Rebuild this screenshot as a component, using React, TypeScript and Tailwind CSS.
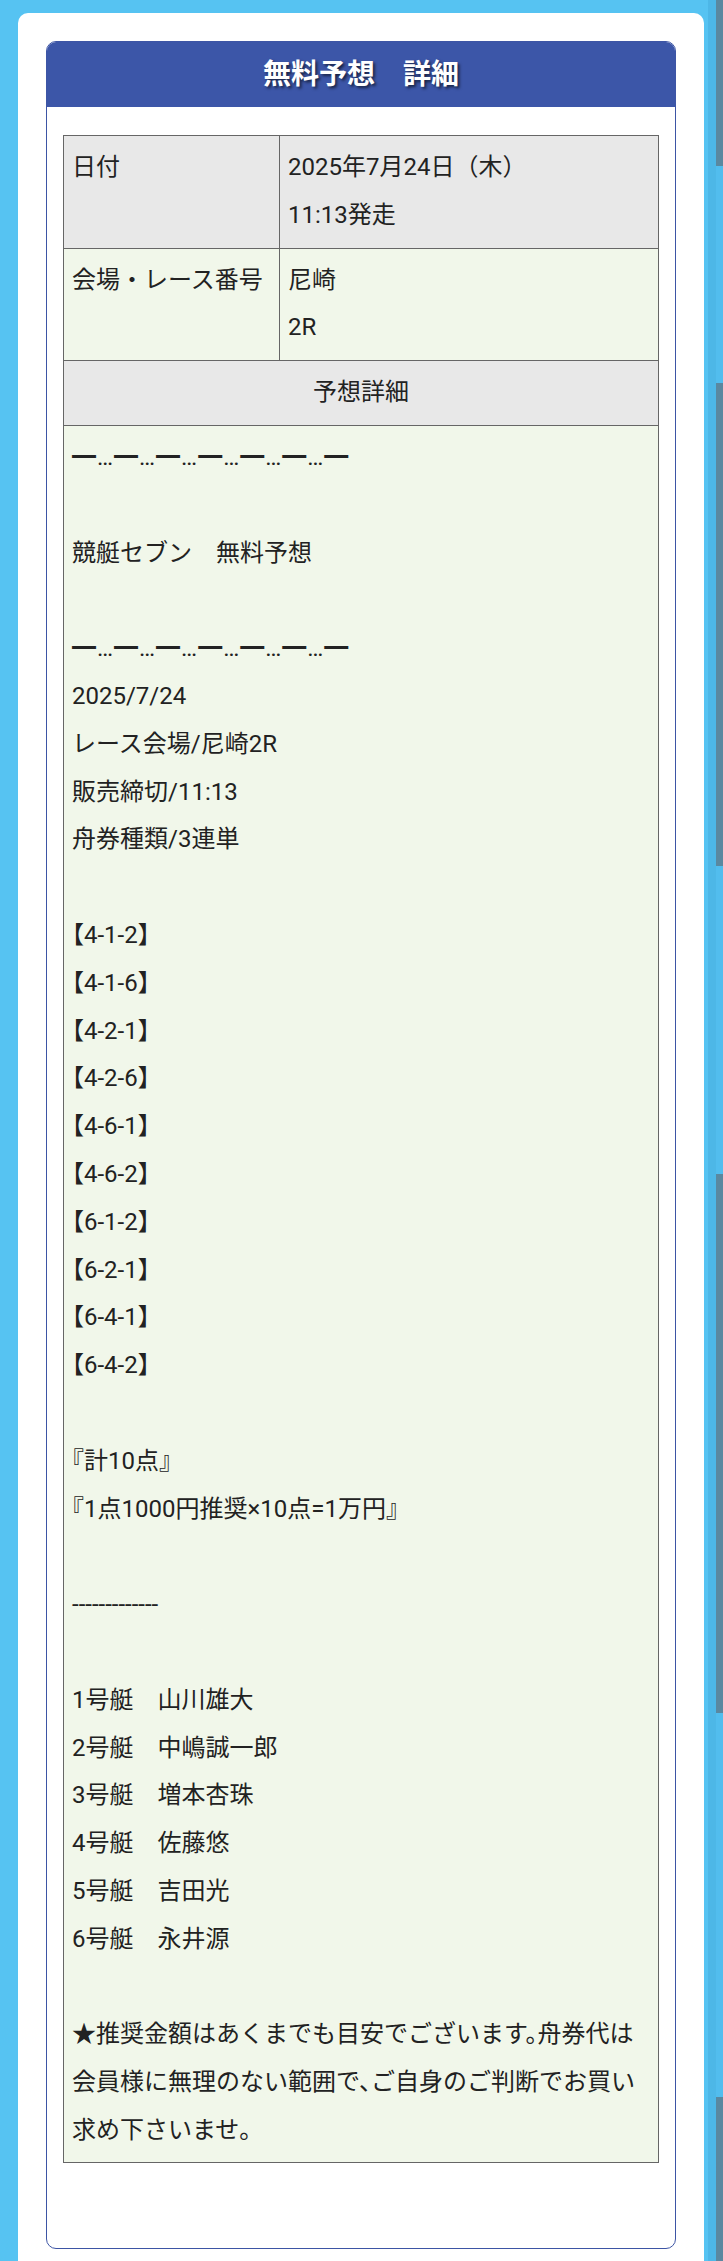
const font = "font-['Roboto','Noto_Sans_CJK_JP',sans-serif]"

const rule = '━…━…━…━…━…━…━'

const lines = [
  rule,
  '',
  '競艇セブン　無料予想',
  '',
  rule,
  '2025/7/24',
  'レース会場/尼崎2R',
  '販売締切/11:13',
  '舟券種類/3連単',
  '',
  '【4-1-2】',
  '【4-1-6】',
  '【4-2-1】',
  '【4-2-6】',
  '【4-6-1】',
  '【4-6-2】',
  '【6-1-2】',
  '【6-2-1】',
  '【6-4-1】',
  '【6-4-2】',
  '',
  '『計10点』',
  '『1点1000円推奨×10点=1万円』',
  '',
  '-------------',
  '',
  '1号艇　山川雄大',
  '2号艇　中嶋誠一郎',
  '3号艇　増本杏珠',
  '4号艇　佐藤悠',
  '5号艇　吉田光',
  '6号艇　永井源',
  '',
  '★推奨金額はあくまでも目安でございます。舟券代は会員様に無理のない範囲で、ご自身のご判断でお買い求め下さいませ。',
]

// grey scroll-ish bars down the right edge
const bars = [
  { h: 166, dark: true },
  { h: 217, dark: false },
  { h: 483, dark: true },
  { h: 308, dark: false },
  { h: 539, dark: true },
  { h: 384, dark: false },
  { h: 164, dark: true },
]

export default function App() {
  return (
    <div className={`flex h-[2261px] w-[723px] overflow-hidden bg-[#56c3f2] ${font} text-[#222]`}>
      <div className="w-[708px] shrink-0 pl-[18px] pt-[13px]">
        <div className="h-full w-[686px] rounded-t-[10px] bg-white px-[28px] pt-[28px]">
          <div className="overflow-hidden rounded-[10px] border border-[#3d55a5] bg-white">
            {/* title bar */}
            <div className="flex h-[65px] items-center justify-center bg-[#3c56a8]">
              <h1 className="text-[28px] font-bold text-white [text-shadow:2px_2px_3px_rgba(0,0,0,0.6)]">
                無料予想　詳細
              </h1>
            </div>

            <div className="px-[16px] pb-[85px] pt-[28px]">
              <div className="border border-[#666] text-[24px] leading-[47.8px] [font-feature-settings:'halt']">
                <div className="grid grid-cols-[216px_1fr] border-b border-[#666] bg-[#e8e8e8]">
                  <div className="border-r border-[#666] px-[8px] py-2">日付</div>
                  <div className="px-[8px] py-2">
                    2025年7月24日<span className="[font-feature-settings:normal]">（木）</span>
                    <br />
                    11:13発走
                  </div>
                </div>

                <div className="grid grid-cols-[216px_1fr] border-b border-[#666] bg-[#f1f7ea]">
                  <div className="border-r border-[#666] px-[8px] py-2 [font-feature-settings:normal]">
                    会場・レース番号
                  </div>
                  <div className="px-[8px] py-2">
                    尼崎
                    <br />
                    2R
                  </div>
                </div>

                <div className="border-b border-[#666] bg-[#e8e8e8] py-2 text-center">予想詳細</div>

                {/* forecast body */}
                <div className="bg-[#f1f7ea] px-[8px] pb-[7px] pt-2">
                  {lines.map((line, i) =>
                    line === '' ? (
                      <div key={i} className="h-[47.8px]" />
                    ) : (
                      <p key={i} className={line === rule ? 'tracking-[1px]' : ''}>
                        {line}
                      </p>
                    )
                  )}
                </div>
              </div>
            </div>
          </div>
        </div>
      </div>

      <div className="w-[8px] shrink-0 bg-[#4db7e7]" />

      <div className="flex w-[7px] shrink-0 flex-col">
        {bars.map((b, i) => (
          <div
            key={i}
            className={b.dark ? 'bg-[#5a88a0]' : 'bg-[#52bdee]'}
            style={{ height: b.h }}
          />
        ))}
      </div>
    </div>
  )
}
